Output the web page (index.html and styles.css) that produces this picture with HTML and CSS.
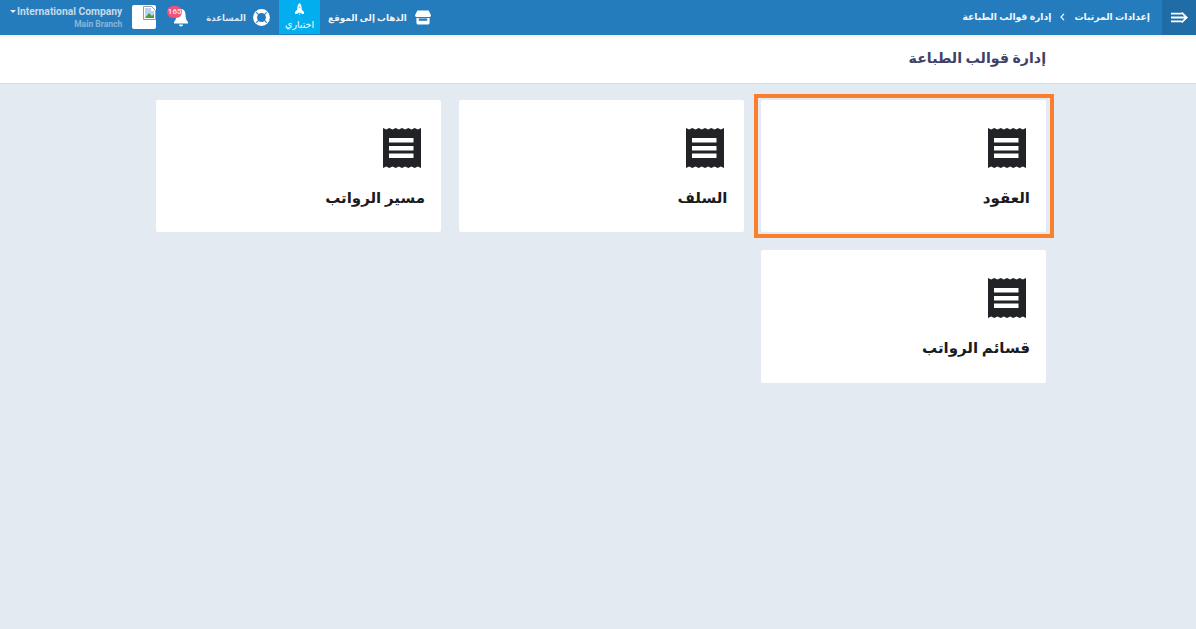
FILE: index.html
```html
<!DOCTYPE html>
<html lang="ar">
<head>
<meta charset="utf-8">
<title>إدارة قوالب الطباعة</title>
<link rel="stylesheet" href="styles.css">
</head>
<body>
<svg class="defs" width="0" height="0" aria-hidden="true">
  <symbol id="receipt" viewBox="0 0 38 40">
    <path fill="#212326" d="M0 0 3.200 1.600 6.300 0l3.200 1.600L12.700 0l3.100 1.600L19 0l3.200 1.600L25.300 0l3.200 1.600L31.700 0l3.100 1.600L38 0v40l-3.200-1.600L31.700 40l-3.200-1.600L25.300 40l-3.100-1.600L19 40l-3.200-1.600L12.700 40l-3.200-1.600L6.300 40l-3.100-1.600L0 40z"/>
    <path fill="#fff" d="M6 10h24.500v4.500H6zM6 18h24.500v4.500H6zM6 25.500h24.500V30H6z"/>
  </symbol>
</svg>
<header class="navbar">
  <div class="nav-start">
    <button class="toggle" aria-label="menu">
      <svg width="17" height="11" viewBox="0 0 17 11"><path d="M0 1.600h10.500M0 5.500h15M0 9.400h10.500M10.700.6 15.800 5.500l-5.100 4.900" fill="none" stroke="#fff" stroke-width="1.800"/></svg>
    </button>
    <nav class="crumbs">
      <span>إعدادات المرتبات</span>
      <svg class="crumb-sep" width="5" height="8" viewBox="0 0 5 8"><path d="M4 .8 1 4l3 3.200" fill="none" stroke="#fff" stroke-width="1.200"/></svg>
      <span>إدارة قوالب الطباعة</span>
    </nav>
  </div>
  <div class="nav-end">
    <a class="nav-link">
      <svg width="16" height="15" viewBox="0 0 17 15"><path fill="#fff" d="M2.500 0h12L17 5c0 1.300-1 2-2.100 2H2.100C1 7 0 6.300 0 5zM1.500 8h14v5a2 2 0 0 1-2 2h-10a2 2 0 0 1-2-2z"/><path fill="#247cbd" d="M4 8.500h9V11H4z"/></svg>
      <span>الذهاب إلى الموقع</span>
    </a>
    <a class="nav-active">
      <svg width="9" height="12" viewBox="0 0 9 12"><path fill="#fff" d="M4.500 0C6.300 1.400 6.800 3.500 6.700 6.500L9 9v2H7L6 9.800H3L2 11H0V9l2.300-2.500C2.200 3.500 2.700 1.400 4.500 0zM3.500 10.400h2L4.500 12z"/><circle cx="4.500" cy="4.300" r="1" fill="#7fd4f6"/></svg>
      <span>اختباري</span>
    </a>
    <a class="nav-link help">
      <svg width="17" height="17" viewBox="0 0 18 18"><circle cx="9" cy="9" r="6.800" fill="none" stroke="#fff" stroke-width="4.200"/><path d="m3.500 3.500 3 3m5 5 3 3m0-11-3 3m-5 5-3 3" stroke="#247cbd" stroke-width="1.200"/></svg>
      <span>المساعدة</span>
    </a>
    <div class="bell">
      <svg width="16" height="18" viewBox="0 0 16 18"><path fill="#fff" d="M8 0c3 0 4.500 2.600 4.500 5.500 0 3.500.7 5.300 2.500 7.500v1.500H1V13c1.800-2.200 2.500-4 2.500-7.500C3.500 2.600 5 0 8 0zM6 15.500h4a2 2 0 0 1-4 0z"/></svg>
      <span class="badge">165</span>
    </div>
    <div class="logo-box">
      <svg width="13" height="14" viewBox="0 0 13 14"><path d="M.5.500h8l4 4v9H.500z" fill="#fff" stroke="#9a9a9a"/><path d="M2 2h6v3h3v7H2z" fill="#b9d2ef"/><path d="m2 12 4-5 3 3 2-2v4z" fill="#4f9a3d"/></svg>
    </div>
    <div class="company">
      <div class="company-name"><i class="caret"></i>International Company</div>
      <div class="company-branch">Main Branch</div>
    </div>
  </div>
</header>
<section class="subheader"><h1>إدارة قوالب الطباعة</h1></section>
<main class="content">
  <div class="grid">
    <a class="card selected"><svg class="receipt"><use href="#receipt"/></svg><span>العقود</span></a>
    <a class="card"><svg class="receipt"><use href="#receipt"/></svg><span>السلف</span></a>
    <a class="card"><svg class="receipt"><use href="#receipt"/></svg><span>مسير الرواتب</span></a>
    <a class="card"><svg class="receipt"><use href="#receipt"/></svg><span>قسائم الرواتب</span></a>
  </div>
</main>
</body>
</html>
```
FILE: styles.css
```css
* { box-sizing: border-box; }
html, body { height: 100%; }
body {
  margin: 0;
  height: 629px;
  overflow: hidden;
  background: #e4eaf2;
  direction: rtl;
  font-family: "Roboto", "DejaVu Sans", sans-serif;
  display: flex;
  flex-direction: column;
}
.defs { display: block; height: 0; }
.navbar {
  height: 35px;
  flex: none;
  background: #247cbd;
  display: flex;
  justify-content: space-between;
  color: #fff;
}
.nav-start, .nav-end { display: flex; align-items: center; }
.toggle {
  width: 34px;
  height: 35px;
  border: 0;
  padding: 0;
  background: #1f6ca6;
  display: flex;
  align-items: center;
  justify-content: center;
}
.crumbs {
  display: flex;
  align-items: center;
  gap: 9px;
  margin-right: 12px;
  font-size: 9.2px;
  font-weight: 700;
  color: #f3f7fb;
  padding-bottom: 2px;
}
.nav-end { padding-left: 10px; }
.nav-link {
  display: flex;
  align-items: center;
  gap: 8px;
  font-size: 8.8px;
  font-weight: 700;
  color: #f0f5fa;
}
.nav-active {
  width: 41px;
  height: 34px;
  margin: 0 8px 0 9px;
  background: #03aeef;
  align-self: flex-start;
  display: flex;
  flex-direction: column;
  align-items: center;
  gap: 4px;
  padding-top: 3px;
  font-size: 9.5px;
}
.help { color: #dce9f4; gap: 7px; font-size: 8.6px; }
.bell {
  position: relative;
  margin: 0 17px;
  height: 18px;
}
.bell svg { display: block; }
.badge {
  position: absolute;
  top: -3px;
  left: -6px;
  width: 15px;
  height: 12px;
  border-radius: 6px;
  background: #f2517a;
  color: #ffd9e3;
  font-size: 8px;
  font-weight: 700;
  text-align: center;
  line-height: 12px;
  direction: ltr;
}
.logo-box {
  width: 24px;
  height: 24px;
  margin-bottom: 1px;
  background: #fff;
  border-radius: 2px;
  display: flex;
  justify-content: flex-start;
  padding-top: 1px;
}
.company {
  margin-right: 10px;
  direction: ltr;
  text-align: right;
  font-weight: 700;
  line-height: 12px;
}
.company-name { font-size: 10.3px; color: #c6d9ea; }
.company-branch { font-size: 8.5px; color: #8cb6d9; }
.caret {
  display: inline-block;
  border: 3px solid transparent;
  border-top-color: #e6eef6;
  border-bottom: 0;
  margin-right: 1px;
  vertical-align: 2px;
}
.subheader {
  height: 49px;
  flex: none;
  background: #fff;
  border-bottom: 1px solid #d8dce2;
  box-shadow: inset 0 6px 6px -6px #e4e4e4;
  padding: 13px 150px 0 0;
}
.subheader h1 {
  margin: 0;
  font-size: 14.2px;
  line-height: 20px;
  font-weight: 700;
  color: #3f4266;
}
.content { padding: 16px 150px 0 156px; }
.grid {
  display: grid;
  grid-template-columns: repeat(3, 285px);
  column-gap: 17.5px;
  row-gap: 18px;
}
.card {
  position: relative;
  height: 133px;
  background: #fff;
  border-radius: 2px;
  padding: 28px 16px 0 0;
  display: flex;
  flex-direction: column;
  align-items: flex-start;
  gap: 20px;
}
.card:nth-child(-n+3) { height: 132px; }
.selected::after {
  content: "";
  position: absolute;
  inset: -6px -8px -6px -7px;
  border: 4px solid #fb7e2c;
}
.receipt { display: block; width: 38px; height: 40px; margin-right: 4px; }
.card span {
  font-size: 15px;
  font-weight: 700;
  line-height: 21px;
  color: #1b1b1f;
}
```
